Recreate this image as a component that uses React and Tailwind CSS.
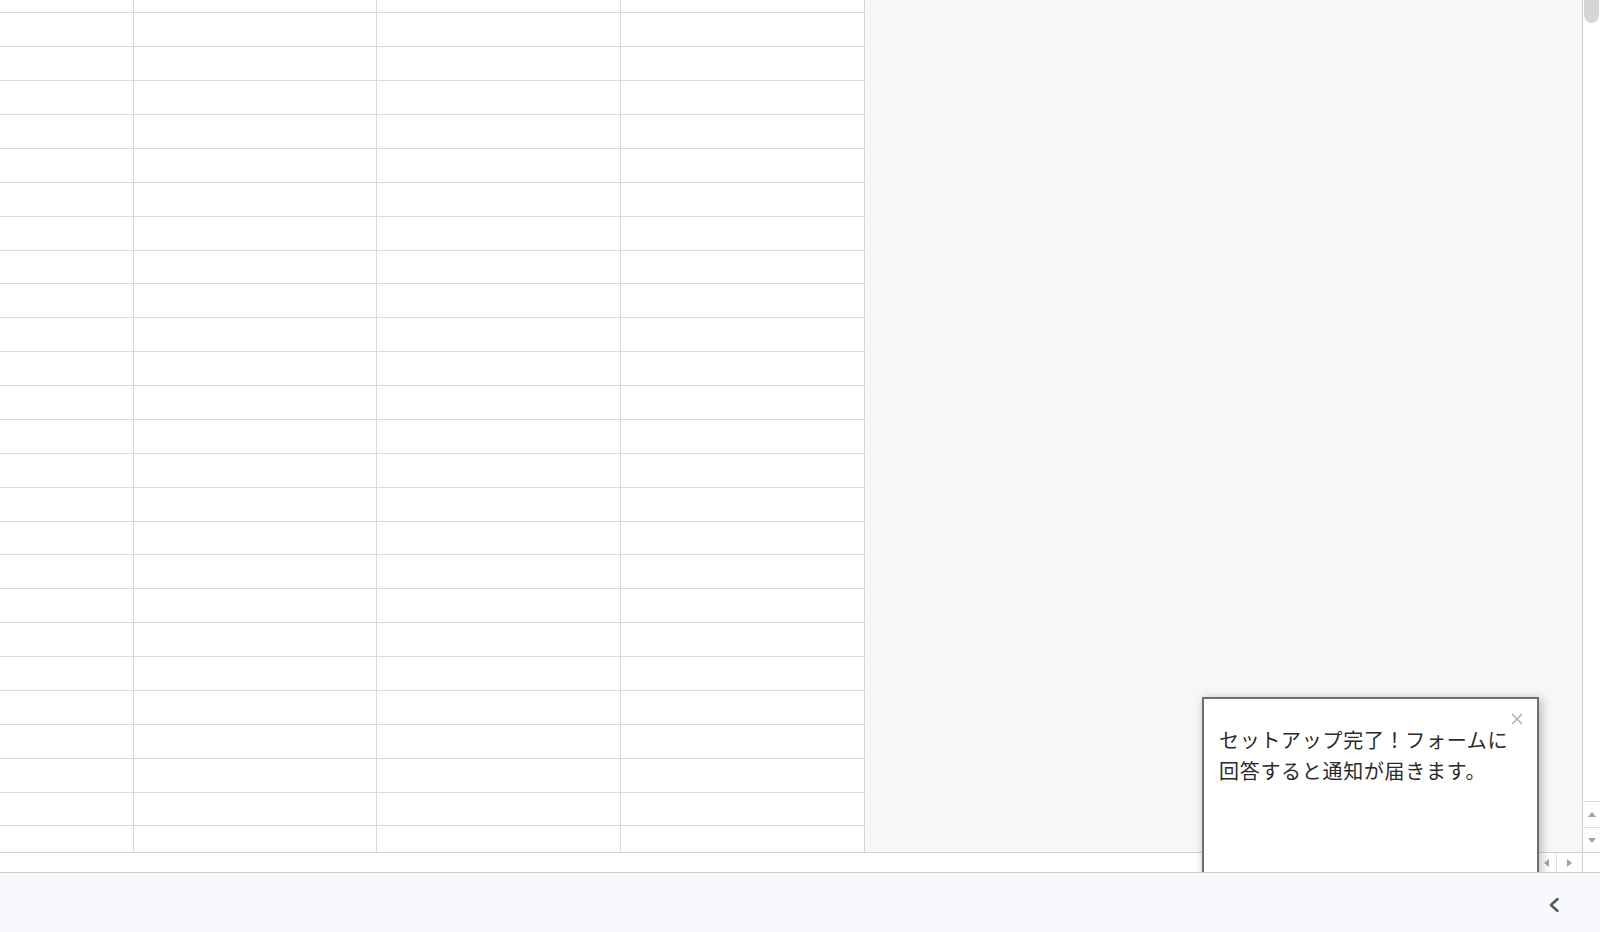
import React from "react";

const ROWS = Array.from({ length: 24 }, (_, i) => i);

function GridRow({ className }) {
  return (
    <div className={`flex border-b border-[#dadada] ${className}`}>
      <div className="w-[134px] shrink-0 border-r border-[#dadada]" />
      <div className="w-[243px] shrink-0 border-r border-[#dadada]" />
      <div className="w-[244px] shrink-0 border-r border-[#dadada]" />
      <div className="w-[244px] shrink-0 border-r border-[#d4d4d4]" />
    </div>
  );
}

function Triangle({ dir }) {
  const pts = {
    up: "0,5 4,0 8,5",
    down: "0,0 4,5 8,0",
    left: "5,0 0,4 5,8",
    right: "0,0 5,4 0,8",
  }[dir];
  const vertical = dir === "up" || dir === "down";
  return (
    <svg
      width={vertical ? 8 : 5}
      height={vertical ? 5 : 8}
      viewBox={vertical ? "0 0 8 5" : "0 0 5 8"}
    >
      <polygon points={pts} fill="#a3a3a3" />
    </svg>
  );
}

export default function App() {
  return (
    <div
      className="w-[1600px] h-[932px] flex flex-col overflow-hidden bg-white"
      style={{ fontFamily: '"Noto Sans CJK JP", "Noto Sans", sans-serif' }}
    >
      {/* sheet area */}
      <div className="relative h-[872px] shrink-0 flex flex-col overflow-hidden">
        <div className="h-[852px] flex">
          {/* cells + empty canvas */}
          <div className="flex-1 flex">
            <div className="w-[865px] shrink-0 flex flex-col bg-white">
              <GridRow className="h-[13px]" />
              {ROWS.map((i) => (
                <GridRow
                  key={i}
                  className={i % 8 === 7 ? "h-[33px]" : "h-[34px]"}
                />
              ))}
              <div className="flex flex-1">
                <div className="w-[134px] shrink-0 border-r border-[#dadada]" />
                <div className="w-[243px] shrink-0 border-r border-[#dadada]" />
                <div className="w-[244px] shrink-0 border-r border-[#dadada]" />
                <div className="w-[244px] shrink-0 border-r border-[#d4d4d4]" />
              </div>
            </div>
            <div className="flex-1 bg-[#f7f8f6]" />
          </div>

          {/* vertical scrollbar */}
          <div className="w-[18px] shrink-0 border-l border-[#cfcfcf] bg-white flex flex-col">
            <div className="flex-1 pl-[1px] pr-[1px]">
              <div className="h-[23px] w-[15px] rounded-b-[8px] bg-[#d6d6d6]" />
            </div>
            <div className="h-[26px] border-t border-[#dedede] flex items-center justify-center">
              <Triangle dir="up" />
            </div>
            <div className="h-[25px] border-t border-[#dedede] flex items-center justify-center">
              <Triangle dir="down" />
            </div>
          </div>
        </div>

        {/* horizontal scrollbar */}
        <div className="h-[20px] shrink-0 border-t border-[#cfcfcf] bg-white flex">
          <div className="flex-1" />
          <div className="w-[20px] flex items-center justify-center border-r border-[#e0e0e0]">
            <Triangle dir="left" />
          </div>
          <div className="w-[25px] flex items-center justify-center">
            <Triangle dir="right" />
          </div>
          <div className="w-[18px] border-l border-[#cfcfcf]" />
        </div>

        {/* notification popup */}
        <div className="absolute left-[1202px] top-[697px] w-[337px] h-[220px] bg-white border-2 border-[#6f6f6f] shadow-[2px_2px_10px_rgba(0,0,0,0.28)]">
          <svg
            className="absolute top-[14px] right-[14px]"
            width="12"
            height="12"
            viewBox="0 0 12 12"
          >
            <path
              d="M1.5 1.5 L10.5 10.5 M10.5 1.5 L1.5 10.5"
              stroke="#b3b3b3"
              strokeWidth="1.6"
              strokeLinecap="round"
            />
          </svg>
          <p className="pl-[15px] pt-[25px] text-[20px] leading-[31px] tracking-[0.7px] text-[#2b2b2b]">
            セットアップ完了！フォームに
            <br />
            回答すると通知が届きます。
          </p>
        </div>
      </div>

      {/* footer bar */}
      <div className="h-[60px] shrink-0 border-t border-[#d2d2d2] bg-[#f8f9fc] flex justify-end pr-[40px] pt-[23px]">
        <svg width="12" height="18" viewBox="0 0 12 18">
          <polyline
            points="9.5,3 3,9 9.5,15"
            fill="none"
            stroke="#555a60"
            strokeWidth="2.5"
            strokeLinecap="round"
            strokeLinejoin="round"
          />
        </svg>
      </div>
    </div>
  );
}
